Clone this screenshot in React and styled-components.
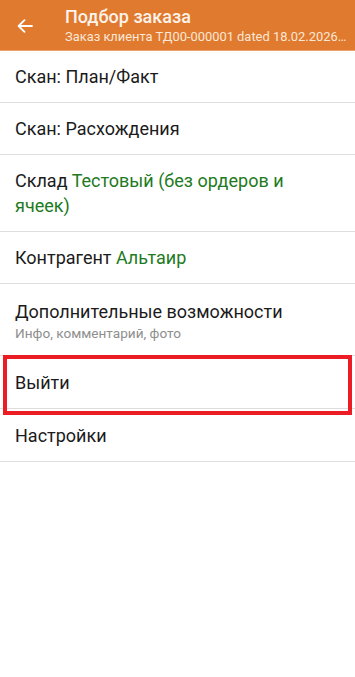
import React from "react";
import styled, { createGlobalStyle } from "styled-components";

const Global = createGlobalStyle`
  html, body { margin: 0; padding: 0; background: #fff; }
  body { font-family: Roboto, "Noto Sans", Arial, sans-serif; -webkit-font-smoothing: antialiased; }
  * { box-sizing: border-box; }
`;

const Screen = styled.div`
  width: 355px;
  min-height: 677px;
  background: #fff;
  display: flex;
  flex-direction: column;
`;

const Header = styled.header`
  height: 51px;
  background: #e07a2e;
  display: flex;
  align-items: center;
  color: #fff;
  border-bottom: 1px solid #eaa36b;
`;

const BackButton = styled.div`
  width: 50px;
  height: 51px;
  display: flex;
  align-items: center;
  justify-content: center;
  padding-right: 1px;
  padding-top: 2px;
  flex-shrink: 0;
`;

const Titles = styled.div`
  display: flex;
  flex-direction: column;
  min-width: 0;
  padding-left: 15px;
  padding-right: 4px;
  padding-top: 1px;
`;

const Title = styled.div`
  font-size: 18px;
  font-weight: 500;
  line-height: 22px;
  color: #fdf3ea;
`;

const Subtitle = styled.div`
  font-size: 12.9px;
  line-height: 17px;
  color: #fbe7d6;
  white-space: nowrap;
`;

const List = styled.div`
  display: flex;
  flex-direction: column;
`;

const Row = styled.div`
  position: relative;
  min-height: ${(p) => p.$h}px;
  padding: ${(p) => p.$pad || "0 15px"};
  display: flex;
  flex-direction: column;
  justify-content: center;
  border-bottom: 1px solid #dedede;
`;

const Label = styled.div`
  font-size: 18px;
  line-height: 25px;
  color: #1b1b1b;
`;

const Value = styled.span`
  color: #217a21;
`;

const Hint = styled.div`
  font-size: 13.6px;
  line-height: 18px;
  color: #8e8e8e;
`;

const Highlight = styled.div`
  position: absolute;
  left: 3px;
  right: 3px;
  top: -1px;
  bottom: -7px;
  border: 4px solid #ec1c24;
  pointer-events: none;
`;

export default function App() {
  return (
    <>
      <Global />
      <Screen>
        <Header>
          <BackButton>
            <svg width="16" height="14" viewBox="0 0 16 14" fill="none">
              <path d="M15 7H2M7.5 1.2L1.6 7l5.9 5.8" stroke="#fff" strokeWidth="1.8" strokeLinecap="round" strokeLinejoin="round" />
            </svg>
          </BackButton>
          <Titles>
            <Title>Подбор заказа</Title>
            <Subtitle>Заказ клиента ТД00-000001 dated 18.02.2026…</Subtitle>
          </Titles>
        </Header>
        <List>
          <Row $h={52}>
            <Label>Скан: План/Факт</Label>
          </Row>
          <Row $h={52}>
            <Label>Скан: Расхождения</Label>
          </Row>
          <Row $h={77}>
            <Label>
              Склад <Value>Тестовый (без ордеров и ячеек)</Value>
            </Label>
          </Row>
          <Row $h={52}>
            <Label>Контрагент <Value>Альтаир</Value></Label>
          </Row>
          <Row $h={72} $pad="2px 15px 0">
            <Label>Дополнительные возможности</Label>
            <Hint>Инфо, комментарий, фото</Hint>
          </Row>
          <Row $h={53}>
            <Label>Выйти</Label>
            <Highlight />
          </Row>
          <Row $h={53}>
            <Label>Настройки</Label>
          </Row>
        </List>
      </Screen>
    </>
  );
}
